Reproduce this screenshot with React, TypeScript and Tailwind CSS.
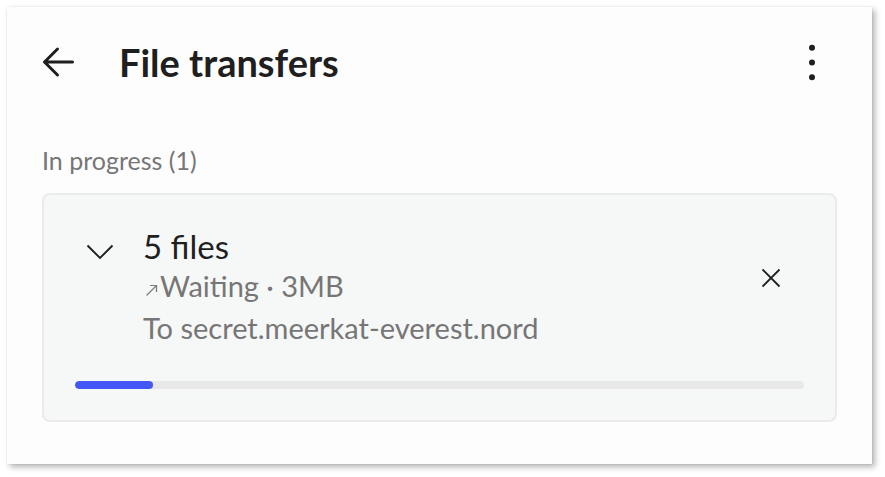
function BackIcon() {
  return (
    <svg width="32" height="32" viewBox="0 0 32 32" className="text-[#1f1f1f]">
      <path
        d="M2.5 16 H30.5 M15.5 3 L2.5 16 L15.5 29"
        fill="none"
        stroke="currentColor"
        strokeWidth="3"
        strokeLinecap="round"
        strokeLinejoin="round"
      />
    </svg>
  );
}

function MoreIcon() {
  return (
    <svg width="8" height="37" viewBox="0 0 8 37" className="text-[#1f1f1f]">
      <circle cx="4" cy="3.8" r="3" fill="currentColor" />
      <circle cx="4" cy="18.5" r="3" fill="currentColor" />
      <circle cx="4" cy="33.2" r="3" fill="currentColor" />
    </svg>
  );
}

function ChevronIcon() {
  return (
    <svg width="28" height="16" viewBox="0 0 28 16" className="text-[#1f1f1f]">
      <path d="M1.5 1.5 L14 14 L26.5 1.5" fill="none" stroke="currentColor" strokeWidth="1.9" />
    </svg>
  );
}

function CloseIcon() {
  return (
    <svg width="20" height="20" viewBox="0 0 20 20" className="text-[#1f1f1f]">
      <path d="M1.5 1.5 L18.5 18.5 M18.5 1.5 L1.5 18.5" fill="none" stroke="currentColor" strokeWidth="1.8" />
    </svg>
  );
}

function OutgoingIcon() {
  return (
    <svg width="16" height="14" viewBox="0 0 16 14" className="mt-[8px] text-[#7a7a7a]">
      <path d="M3.5 12.5 L13.5 2.5 M7 2.5 H13.5 V9" fill="none" stroke="currentColor" strokeWidth="1.2" />
    </svg>
  );
}

export default function App() {
  return (
    <div className="w-[885px] h-[477px] bg-white p-[7px] font-['Lato',sans-serif]">
      <div className="w-[865px] h-[457px] bg-[#fdfdfd] shadow-[0_0_1px_rgba(0,0,0,0.15),3px_3px_6px_rgba(0,0,0,0.3)] flex flex-col">
        {/* Top bar */}
        <div className="flex items-center h-[110px] pl-[35px] pr-[56px]">
          <BackIcon />
          <h1 className="ml-[45px] text-[38px] font-bold text-[#1f1f1f] leading-none">File transfers</h1>
          <div className="ml-auto flex">
            <MoreIcon />
          </div>
        </div>

        <div className="px-[35px] pt-[31px]">
          <div className="text-[25px] text-[#767676] leading-none">In progress (1)</div>

          {/* Transfer card */}
          <div className="mt-[20px] h-[229px] rounded-[8px] border-2 border-[#ebebeb] bg-[#f6f7f7] px-[31px] pt-[31px]">
            <div className="flex">
              <div className="w-[50px] flex justify-center items-start pt-[18px]">
                <ChevronIcon />
              </div>
              <div className="ml-[18px] flex-1">
                <div className="text-[33px] text-[#1f1f1f] leading-[40px]">5 files</div>
                <div className="flex items-center text-[29px] text-[#767676] leading-[40px]">
                  <OutgoingIcon />
                  <span className="ml-[1px]">Waiting · 3MB</span>
                </div>
                <div className="text-[29px] text-[#767676] leading-[44px]">To secret.meerkat-everest.nord</div>
              </div>
              <div className="mt-[42px] mr-[23px] self-start flex">
                <CloseIcon />
              </div>
            </div>
            <div className="mt-[31px] h-[8px] rounded-full bg-[#e8e8e8] overflow-hidden">
              <div className="h-full rounded-full bg-[#4356f6]" style={{ width: '10.7%' }} />
            </div>
          </div>
        </div>
      </div>
    </div>
  );
}
